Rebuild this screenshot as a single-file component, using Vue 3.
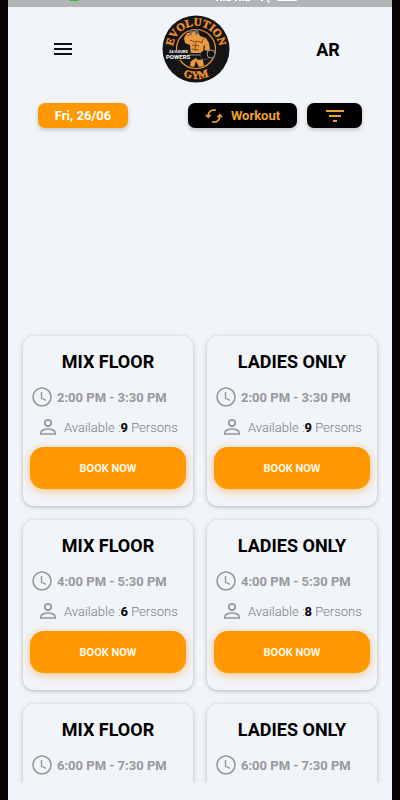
<template>
  <div class="screen">
    <div class="status-bar">
      <span class="status-dot"></span>
      <svg class="status-icons" viewBox="0 0 90 7" aria-hidden="true">
        <g fill="#fff">
          <path d="M0 0h2v1H0zM4 0h2v1H4zM7 0h2v1H7zM10 0h5v1h-5zM19 0h2v1h-2zM23 0h2v1h-2zM26 0h2v1h-2zM29 0h5v1h-5z" />
          <path d="M45 0h2v1h-2zM50 0l4 1-1 2-1-1z" />
          <rect x="61" y="-4" width="20" height="5" rx="1" />
        </g>
      </svg>
    </div>

    <header class="header">
      <button class="menu-btn" aria-label="Menu">
        <svg viewBox="0 0 18 12">
          <path d="M0 1h18M0 6h18M0 11h18" stroke="#111" stroke-width="2" />
        </svg>
      </button>
      <svg class="logo" viewBox="0 0 68 68" role="img" aria-label="Evolution Gym">
        <defs>
          <path id="arc-top" d="M12.500 42A23 23 0 1 1 55.500 42" />
          <path id="arc-bottom" d="M4 34A30 30 0 0 0 64 34" />
        </defs>
        <circle cx="34" cy="34" r="33.5" fill="#151515" />
        <circle cx="34" cy="34" r="19.5" fill="none" stroke="#ee9331" stroke-width="1.2" />
        <text class="logo-text">
          <textPath href="#arc-top" startOffset="50%">EVOLUTION</textPath>
        </text>
        <text class="logo-text">
          <textPath href="#arc-bottom" startOffset="50%">GYM</textPath>
        </text>
        <!-- bodybuilder -->
        <path d="M30 40l-2 11 4 1 2-6 3 6 5-1-2-11z" fill="#e99b43" />
        <path d="M28 18l4-2 4 1 2 4 6 2 3 5 1 6-3 4-3-1 1-5-1-3-1 11H29l-1-10-5-2-1-5 3-5z" fill="#e99b43" />
        <path d="M28 38h13l1 6-6 1-2-2-5 3z" fill="#111" />
        <path d="M28 25l5 2 2-1 6 2M34 27l-1 9M30 30l7 1M30 34l7 1M25 21l5-2M42 23l-3 5" fill="none" stroke="#8a4a16" stroke-width="1" />
        <path d="M26 16l4-2 1 3-3 2zM32 15l4-1 1 4-3 2z" fill="#6a625b" />
        <path d="M26 40h24" stroke="#8d8d8d" stroke-width="1" />
        <circle cx="43" cy="40" r="4.500" fill="#111" stroke="#444" />
        <circle cx="49" cy="39" r="4" fill="#111" stroke="#999" />
        <path d="M4 35h23v10H4z" fill="#151515" />
        <text class="logo-small" x="7" y="38">24 HOURS</text>
        <text class="logo-tag" x="4" y="44">POWERS</text>
      </svg>
      <button class="lang-btn">AR</button>
    </header>

    <div class="toolbar">
      <button class="pill date">Fri, 26/06</button>
      <button class="pill dark workout">
        <svg class="sync-icon" viewBox="0 0 18 16" fill="none" stroke="currentColor" stroke-width="1.6">
          <path d="M11 2.2A6 6 0 0 0 3.2 8.5M7 13.8A6 6 0 0 0 14.8 7.5" />
          <path d="M.8 6.800l2.400 2.500 2.400-2.500M12.400 9.200l2.400-2.500 2.400 2.500" />
        </svg>
        Workout
      </button>
      <button class="pill dark filter" aria-label="Filter">
        <svg class="filter-icon" viewBox="0 0 18 12">
          <path d="M0 1h18M3 6h12M7 11h4" stroke="currentColor" stroke-width="2" />
        </svg>
      </button>
    </div>

    <main class="sessions">
      <article v-for="session in sessions" :key="session.id" class="card">
        <h2 class="card-title">{{ session.title }}</h2>
        <p class="time">
          <svg viewBox="0 0 20 20" fill="none" stroke="currentColor">
            <circle cx="10" cy="10" r="9" stroke-width="1.6" />
            <path d="M9.500 5v6l4.500 2.300" stroke-width="1.4" />
          </svg>
          {{ session.time }}
        </p>
        <template v-if="session.places">
          <p class="available">
            <svg viewBox="0 0 18 18" fill="none" stroke="currentColor" stroke-width="1.7">
              <circle cx="9" cy="5" r="3.200" />
              <path d="M1.900 16v-1.600c0-2.200 4.200-3.400 7.100-3.400s7.100 1.200 7.100 3.400V16z" />
            </svg>
            <span class="available-text">Available :<b>{{ session.places }}</b> Persons</span>
          </p>
          <button class="book-btn">BOOK NOW</button>
        </template>
      </article>
    </main>
  </div>
</template>

<script setup>
import { ref } from 'vue';

// sessions without places yet can't be booked
const sessions = ref([
  { id: 1, title: 'MIX FLOOR', time: '2:00 PM - 3:30 PM', places: 9 },
  { id: 2, title: 'LADIES ONLY', time: '2:00 PM - 3:30 PM', places: 9 },
  { id: 3, title: 'MIX FLOOR', time: '4:00 PM - 5:30 PM', places: 6 },
  { id: 4, title: 'LADIES ONLY', time: '4:00 PM - 5:30 PM', places: 8 },
  { id: 5, title: 'MIX FLOOR', time: '6:00 PM - 7:30 PM' },
  { id: 6, title: 'LADIES ONLY', time: '6:00 PM - 7:30 PM' },
]);
</script>

<style>
body {
  background: #f1f4f9;
}
</style>

<style scoped>
.screen {
  box-sizing: border-box;
  height: 100vh;
  display: flex;
  flex-direction: column;
  padding-bottom: 17px;
  border: solid #050304;
  border-width: 0 8px;
  background: #f1f4f9;
  color: #000;
  font-family: Roboto, sans-serif;
  overflow: hidden;
}

button {
  border: none;
  padding: 0;
  font-family: inherit;
  cursor: pointer;
}

.status-bar {
  flex: none;
  display: flex;
  justify-content: space-between;
  height: 7px;
  padding: 0 86px 0 61px;
  background: #b1b5b8;
  overflow: hidden;
}

.status-dot {
  width: 10px;
  height: 1px;
  border-radius: 0 0 5px 5px;
  background: #42bd3b;
}

.status-icons {
  width: 90px;
  height: 7px;
}

.header {
  flex: none;
  display: flex;
  align-items: center;
  justify-content: space-between;
  padding: 8px 52px 0 46px;
}

.menu-btn {
  display: flex;
  width: 22px;
  background: none;
}

.menu-btn svg {
  width: 18px;
  height: 12px;
}

.logo {
  width: 68px;
  height: 68px;
}

.logo-text {
  fill: #ee9331;
  font-family: 'Liberation Serif', serif;
  font-size: 11px;
  font-weight: bold;
  text-anchor: middle;
  stroke: #ee9331;
  stroke-width: 0.4px;
}

.logo-small,
.logo-tag {
  fill: #fff;
  font-size: 4px;
  font-weight: bold;
}

.logo-tag {
  font-size: 6px;
}

.lang-btn {
  width: 24px;
  background: none;
  color: #000;
  font-size: 18px;
  font-weight: bold;
}

.toolbar {
  flex: none;
  display: flex;
  gap: 10px;
  padding: 20px 30px 0;
}

.pill {
  display: flex;
  align-items: center;
  justify-content: center;
  height: 25px;
  border-radius: 7px;
  font-size: 13px;
  font-weight: bold;
  box-shadow: 0 2px 4px rgba(0, 0, 0, 0.2);
}

.date {
  width: 90px;
  margin-right: auto;
  background: #ff9800;
  color: #fff;
}

.dark {
  background: #000;
  color: #f0a030;
}

.workout {
  gap: 8px;
  width: 109px;
}

.filter {
  width: 55px;
}

.sync-icon {
  width: 18px;
  height: 16px;
}

.filter-icon {
  width: 18px;
  height: 12px;
}

.sessions {
  flex: 1;
  min-height: 0;
  display: grid;
  grid-template-columns: 1fr 1fr;
  align-content: start;
  gap: 14px;
  margin-top: 198px;
  padding: 10px 15px 0;
  overflow: hidden;
}

.card {
  box-sizing: border-box;
  display: flex;
  flex-direction: column;
  min-height: 170px;
  padding: 12px 7px 16px;
  border-radius: 11px;
  background: #f1f4f9;
  box-shadow: 0 1px 4px rgba(0, 0, 0, 0.25);
}

.card-title {
  margin: 0;
  font-size: 18px;
  font-weight: bold;
  line-height: 28px;
  text-align: center;
}

.time,
.available {
  display: flex;
  align-items: center;
  gap: 5px;
  height: 20px;
  margin: 11px 0 0 2px;
  color: #96999c;
  font-size: 13px;
  white-space: nowrap;
}

.time {
  font-weight: bold;
}

.time svg {
  width: 20px;
  height: 20px;
}

.available {
  gap: 7px;
  margin: 10px 0 0 9px;
  font-weight: 300;
}

.available svg {
  width: 18px;
  height: 18px;
}

.available-text {
  color: #7b7e81;
}

.available b {
  color: #000;
  font-weight: bold;
}

.book-btn {
  height: 42px;
  margin-top: 10px;
  border-radius: 14px;
  background: #ff9800;
  color: #fff8e8;
  font-size: 11px;
  font-weight: bold;
  box-shadow: 0 2px 8px rgba(255, 152, 0, 0.5);
}
</style>
